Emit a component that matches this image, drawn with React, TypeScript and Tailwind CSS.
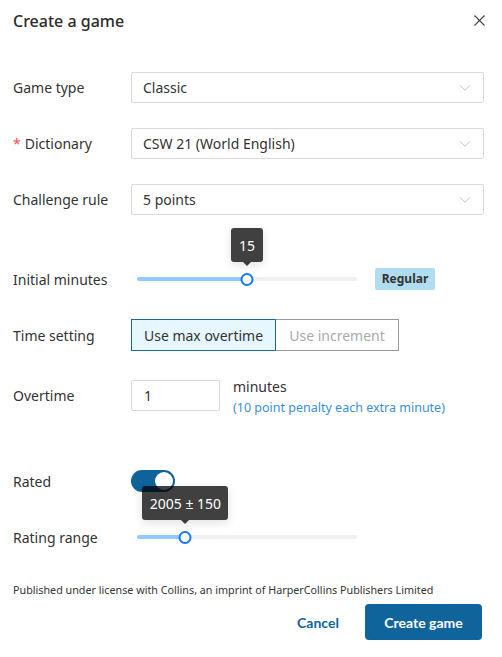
import { ChevronDown, X } from "lucide-react";

const font = { fontFamily: '"Noto Sans", "Open Sans", sans-serif' };

function Select({ value }: { value: string }) {
  return (
    <div className="flex h-[31px] flex-1 items-center justify-between rounded-[2px] border border-[#d9d9d9] pr-[9px] pl-[11px] text-[14px] text-[#333]">
      <span>{value}</span>
      <ChevronDown size={18} strokeWidth={1} className="text-[#aaa]" />
    </div>
  );
}

function Slider({ pct, tip, tipW }: { pct: number; tip: string; tipW: number }) {
  return (
    <div className="relative ml-[6px] h-[12px] w-[220px]">
      <div className="absolute top-[4px] left-0 h-[4px] w-full rounded-full bg-[#f0f0f0]" />
      <div
        className="absolute top-[4px] left-0 h-[4px] rounded-full bg-[#91caff]"
        style={{ width: `${pct}%` }}
      />
      <div
        className="absolute top-0 h-[13px] w-[13px] -translate-x-1/2 rounded-full border-2 border-[#1677ff] bg-white"
        style={{ left: `${pct}%` }}
      />
      <div
        className="absolute bottom-[19px] flex -translate-x-1/2 flex-col items-center"
        style={{ left: `${pct}%` }}
      >
        <div
          className="flex h-[34px] items-center justify-center rounded-[3px] bg-black/75 text-[14px] text-white shadow-[0_3px_10px_rgba(0,0,0,0.12)]"
          style={{ width: tipW }}
        >
          {tip}
        </div>
        <div className="h-0 w-0 border-x-[4px] border-t-[4px] border-x-transparent border-t-black/75" />
      </div>
    </div>
  );
}

export default function App() {
  return (
    <div className="min-h-[657px] w-[502px] bg-white pr-[18px] pl-[13px] text-[14px] text-[#333]" style={font}>
      {/* header */}
      <div className="flex h-[41px] items-center justify-between">
        <div className="text-[16px] font-medium text-[#2b2b2b]">Create a game</div>
        <X size={19} strokeWidth={1.4} className="-mr-[5px] text-[#444]" />
      </div>

      <div className="mt-[31px] flex h-[31px] items-center">
        <div className="w-[118px]">Game type</div>
        <Select value="Classic" />
      </div>

      <div className="mt-[25px] flex h-[31px] items-center">
        <div className="w-[118px]">
          <span className="mr-1 text-[#ff4d4f]">*</span>Dictionary
        </div>
        <Select value="CSW 21 (World English)" />
      </div>

      <div className="mt-[25px] flex h-[31px] items-center">
        <div className="w-[118px]">Challenge rule</div>
        <Select value="5 points" />
      </div>

      <div className="mt-[48px] flex h-[32px] items-center">
        <div className="w-[118px]">Initial minutes</div>
        <Slider pct={50} tip="15" tipW={32} />
        <div className="ml-[18px] flex h-[22px] w-[60px] items-center justify-center rounded-[2px] bg-[#b1ddf1] text-[12px] font-bold text-[#333]">
          Regular
        </div>
      </div>

      <div className="mt-[24px] flex h-[32px] items-center">
        <div className="w-[118px]">Time setting</div>
        <div className="flex h-[32px]">
          <div className="flex w-[145px] items-center justify-center border border-[#1668a6] bg-[#e6f7ff] text-[#333]">
            Use max overtime
          </div>
          <div className="flex w-[123px] items-center justify-center border border-l-0 border-[#999] text-[#aaa]">
            Use increment
          </div>
        </div>
      </div>

      <div className="mt-[29px] flex h-[38px] items-start">
        <div className="flex h-[31px] w-[118px] items-center">Overtime</div>
        <div className="flex h-[31px] w-[89px] items-center rounded-[2px] border border-[#d9d9d9] pl-3">1</div>
        <div className="ml-[13px] -mt-[4px] flex flex-col leading-[21px]">
          <span>minutes</span>
          <span className="text-[12.5px] text-[#3b8fd6]">(10 point penalty each extra minute)</span>
        </div>
      </div>

      <div className="mt-[52px] flex h-[22px] items-center">
        <div className="w-[118px]">Rated</div>
        <div className="flex h-[22px] w-[44px] items-center justify-end rounded-full bg-[#0f639a] pr-[2px]">
          <div className="h-[18px] w-[18px] rounded-full bg-white" />
        </div>
      </div>

      <div className="mt-[34px] flex h-[22px] items-center">
        <div className="w-[118px]">Rating range</div>
        <Slider pct={22} tip="2005 ± 150" tipW={86} />
      </div>

      <div className="mt-[34px] text-[10.75px] text-[#333]">
        Published under license with Collins, an imprint of HarperCollins Publishers Limited
      </div>

      <div
        className="mt-[6px] flex justify-end gap-2"
        style={{ fontFamily: 'Lato, "Noto Sans", sans-serif' }}
      >
        <div className="flex h-[36px] w-[78px] items-center justify-center rounded-[4px] text-[14px] font-bold text-[#10649c]">
          Cancel
        </div>
        <div className="mr-[2px] flex h-[36px] w-[117px] items-center justify-center rounded-[4px] bg-[#10649c] text-[14px] font-bold text-white">
          Create game
        </div>
      </div>
    </div>
  );
}
